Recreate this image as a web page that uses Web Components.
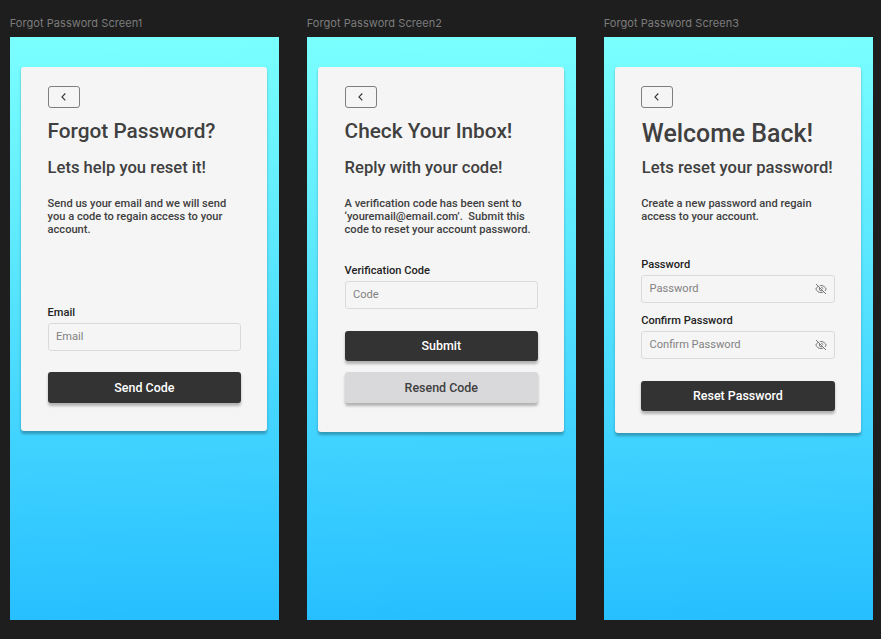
<!DOCTYPE html>
<html lang="en">
<head>
<meta charset="utf-8">
<title>Forgot Password Screens</title>
<style>
  html, body { margin: 0; height: 100%; background: #1e1e1e; overflow: hidden; }
  body { font-family: Roboto, "Liberation Sans", sans-serif; }
</style>
</head>
<body>
<design-canvas>
  <screen-frame name="Forgot Password Screen1">
    <auth-card style="--card-h:363.7px">
      <back-button></back-button>
      <card-heading>Forgot Password?<span slot="sub">Lets help you reset it!</span></card-heading>
      <card-copy>Send us your email and we will send<br>you a code to regain access to your<br>account.</card-copy>
      <text-field label="Email" placeholder="Email" style="margin-top:69.6px"></text-field>
      <action-button style="margin-top:21.5px">Send Code</action-button>
    </auth-card>
  </screen-frame>
  <screen-frame name="Forgot Password Screen2">
    <auth-card style="--card-h:364.8px">
      <back-button></back-button>
      <card-heading>Check Your Inbox!<span slot="sub">Reply with your code!</span></card-heading>
      <card-copy>A verification code has been sent to<br>‘youremail@email.com’.&nbsp; Submit this<br>code to reset your account password.</card-copy>
      <text-field label="Verification Code" placeholder="Code" style="margin-top:27.5px"></text-field>
      <action-button style="margin-top:21.7px">Submit</action-button>
      <action-button kind="secondary" style="margin-top:11.3px">Resend Code</action-button>
    </auth-card>
  </screen-frame>
  <screen-frame name="Forgot Password Screen3">
    <auth-card style="--card-h:365.5px; --nudge:-0.4px">
      <back-button></back-button>
      <card-heading size="large">Welcome Back!<span slot="sub">Lets reset your password!</span></card-heading>
      <card-copy>Create a new password and regain<br>access to your account.</card-copy>
      <text-field label="Password" placeholder="Password" concealed style="margin-top:35px"></text-field>
      <text-field label="Confirm Password" placeholder="Confirm Password" concealed style="margin-top:11px"></text-field>
      <action-button style="margin-top:21.3px">Reset Password</action-button>
    </auth-card>
  </screen-frame>
</design-canvas>
<script>
const define = (name, html, setup) => {
  const tpl = document.createElement('template');
  tpl.innerHTML = html;
  customElements.define(name, class extends HTMLElement {
    constructor() {
      super();
      this.attachShadow({ mode: 'open' }).append(tpl.content.cloneNode(true));
    }
    connectedCallback() { if (setup) setup(this, this.shadowRoot); }
  });
};

define('design-canvas', `
  <style>
    :host { display: grid; grid-template-columns: repeat(3, 269.3px); column-gap: 27.7px;
      box-sizing: border-box; height: 639px; padding: 15px 0 0 9.7px; align-content: start; }
  </style><slot></slot>`);

define('screen-frame', `
  <style>
    :host { display: block; }
    .name { font: 400 11px/16px Inter, sans-serif; color: #7c7c7c; height: 22px; white-space: nowrap; letter-spacing: .06px; }
    .screen { box-sizing: border-box; height: 583px; padding: 30.4px 11.6px 0;
      background: linear-gradient(177deg, #27bfff 1%, #27bfff 1%);
      background: linear-gradient(178.500deg, #7affff 1%, #27bfff 99%); }
  </style>
  <div class="name"></div><div class="screen"><slot></slot></div>`,
  (el, root) => { root.querySelector('.name').textContent = el.getAttribute('name'); });

define('auth-card', `
  <style>
    :host { display: flex; flex-direction: column; align-items: stretch; box-sizing: border-box;
      height: var(--card-h); padding: 18.6px 26.3px 0; background: #f5f5f5; border-radius: 3px;
      box-shadow: 0 2.5px 2.8px rgba(0,0,0,.27); color: #404040; }
    .inner { display: flex; flex-direction: column; margin-left: var(--nudge, 0px); margin-right: calc(0px - var(--nudge, 0px)); }
  </style><div class="inner"><slot></slot></div>`);

define('back-button', `
  <style>
    :host { display: flex; align-items: center; justify-content: center; box-sizing: border-box;
      width: 32px; height: 22px; border: 1px solid #7e7e7e; border-radius: 3px; }
    svg { display: block; }
  </style>
  <svg width="8" height="10" viewBox="0 0 8 10" fill="none" stroke="#333" stroke-width="1.15"><path d="M5.300 1.500 2 4.900l3.300 3.400"/></svg>`);

define('card-heading', `
  <style>
    :host { display: block; font-weight: 500; white-space: nowrap; }
    .title { margin-top: 11.4px; height: 38.5px; font-size: 20.8px; line-height: 24px; }
    .sub { font-size: 16.6px; line-height: 20px; }
    :host([size=large]) .title { font-size: 24.9px; line-height: 30px; padding-left: .7px; }
    :host([size=large]) .sub { padding-left: .7px; }
  </style>
  <div class="title"><slot></slot></div><div class="sub"><slot name="sub"></slot></div>`);

define('card-copy', `
  <style>
    :host { display: block; margin-top: 18.800px; font-weight: 500; font-size: 11.1px; line-height: 13.15px; white-space: nowrap; }
  </style><slot></slot>`);

define('text-field', `
  <style>
    :host { display: block; }
    label { display: block; font-weight: 500; font-size: 11.1px; line-height: 14px; color: #222; }
    .box { display: flex; align-items: center; justify-content: space-between; box-sizing: border-box;
      height: 28px; margin-top: 3.2px; padding: 0 7px 0 7.4px; border: 1px solid #d9dadb; border-radius: 3px;
      font-size: 11.1px; line-height: 14px; color: #828282; }
    svg { display: none; }
    :host([concealed]) svg { display: block; }
  </style>
  <label></label>
  <div class="box"><span></span>
    <svg width="12" height="12" viewBox="0 0 24 24" fill="none" stroke="#777" stroke-width="2">
      <path d="M2 2l20 20M9.5 5.2A11 11 0 0 1 12 4.9c5 0 8.8 3.3 10.3 7.1a11.8 11.8 0 0 1-2.7 4M6.2 6.7A11.8 11.8 0 0 0 1.7 12C3.2 15.8 7 19.1 12 19.1c2 0 3.7-.5 5.2-1.3M9.4 9.5a3.7 3.7 0 0 0 5.2 5.2M12.5 8.3a3.7 3.7 0 0 1 3.2 3.2"/>
    </svg>
  </div>`,
  (el, root) => {
    root.querySelector('label').textContent = el.getAttribute('label');
    root.querySelector('span').textContent = el.getAttribute('placeholder');
  });

define('action-button', `
  <style>
    :host { display: flex; align-items: center; justify-content: center; height: 30.5px; border-radius: 3px;
      background: #333; color: #fff; font-weight: 500; font-size: 12.45px; line-height: 16px;
      box-shadow: 0 2.5px 2.8px rgba(0,0,0,.27); }
    :host([kind=secondary]) { background: #d9d9db; color: #404040; }
  </style><slot></slot>`);
</script>
</body>
</html>
